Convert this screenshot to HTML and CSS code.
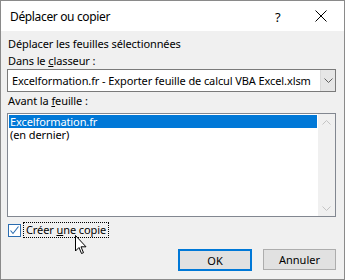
FILE: index.html
```html
<!DOCTYPE html>
<html lang="fr">
<head>
<meta charset="utf-8">
<link rel="stylesheet" href="styles.css">
</head>
<body>
<div class="window">
  <div class="titlebar">
    <span class="title">Déplacer ou copier</span>
    <span class="help">?</span>
    <svg class="close" width="12" height="12" viewBox="0 0 12 12"><path d="M0.5 0.5 L11.5 11.5 M11.5 0.5 L0.5 11.5" stroke="#000" stroke-width="1" fill="none"/></svg>
  </div>
  <div class="content">
    <div class="label l1">Déplacer les feuilles sélectionnées</div>
    <div class="label l2">Dans le <u>c</u>lasseur :</div>
    <div class="combo">
      <span class="combo-text">Excelformation.fr - Exporter feuille de calcul VBA Excel.xlsm</span>
      <span class="combo-btn"><svg width="9" height="5" viewBox="0 0 9 5"><path d="M0.5 0.5 L4.5 4.5 L8.5 0.5" stroke="#606060" fill="none"/></svg></span>
    </div>
    <div class="label l3">Avant la <u>f</u>euille :</div>
    <div class="listbox">
      <div class="items">
        <div class="item selected">Excelformation.fr</div>
        <div class="item">(en dernier)</div>
      </div>
      <div class="scrollbar">
        <svg width="9" height="5" viewBox="0 0 9 5"><path d="M0.5 4.5 L4.5 0.5 L8.5 4.5" stroke="#c4c4c4" fill="none"/></svg>
        <svg width="9" height="5" viewBox="0 0 9 5"><path d="M0.5 0.5 L4.5 4.5 L8.5 0.5" stroke="#c4c4c4" fill="none"/></svg>
      </div>
    </div>
    <div class="checkrow">
      <span class="checkbox"><svg width="11" height="11" viewBox="0 0 11 11"><path d="M1.5 5.5 L4 8.5 L9.5 1.5" stroke="#2a6cb0" stroke-width="1.1" fill="none"/></svg></span>
      <span class="checklabel">Créer <u>u</u>ne copie</span>
    </div>
    <div class="buttons">
      <button class="btn ok">OK</button>
      <button class="btn">Annuler</button>
    </div>
  </div>
  <svg class="cursor" width="13" height="20" viewBox="0 0 13 20"><path d="M0.5 0.5 L0.5 16 L4 12.5 L6.5 18.5 L8.5 17.7 L6 11.8 L11 11.8 Z" fill="#fff" stroke="#000" stroke-width="1" stroke-linejoin="miter"/></svg>
</div>
</body>
</html>
```

FILE: styles.css
```css
* { box-sizing: border-box; }
body {
  margin: 0;
  font-family: "Noto Sans", "Open Sans", sans-serif;
  font-size: 11px;
  letter-spacing: -0.1px;
  color: #000;
}
.window {
  position: relative;
  width: 345px;
  height: 280px;
  border: 1px solid #8a8a8a;
  background: #f0f0f0;
  overflow: hidden;
}
.titlebar {
  height: 30px;
  background: #fff;
  display: flex;
  align-items: center;
  padding: 0 0 0 9px;
}
.title {
  font-size: 12px;
  letter-spacing: -0.35px;
  flex: 1;
  padding-top: 1px;
}
.help {
  font-size: 13px;
  width: 10px;
  margin-right: 30px;
  padding-top: 1px;
}
.close {
  margin-right: 17px;
}
.content {
  padding: 5px 8px 0 6px;
  display: flex;
  flex-direction: column;
}
.label {
  line-height: 15px;
  height: 15px;
  padding-left: 1px;
}
.l2 { margin-top: 2px; }
.combo {
  margin-top: 1px;
  height: 23px;
  border: 1px solid #7a7a7a;
  background: #fff;
  display: flex;
  align-items: stretch;
}
.combo-text {
  flex: 1;
  padding-left: 4px;
  line-height: 21px;
  white-space: nowrap;
  overflow: hidden;
}
.combo-btn {
  width: 15px;
  background: #e6e6e6;
  border-left: 1px solid #d9d9d9;
  display: flex;
  align-items: center;
  justify-content: center;
}
.l3 { margin-top: 1px; }
.listbox {
  margin-top: 5px;
  height: 104px;
  border: 1px solid #828790;
  background: #fff;
  display: flex;
}
.items {
  flex: 1;
  padding: 1px 1px 0 1px;
}
.item {
  height: 13px;
  line-height: 13px;
  padding-left: 1px;
  white-space: nowrap;
}
.item.selected {
  background: #0078d7;
  color: #fff;
}
.scrollbar {
  width: 17px;
  background: #f0f0f0;
  display: flex;
  flex-direction: column;
  justify-content: space-between;
  align-items: center;
  padding: 6px 0 5px;
}
.checkrow {
  margin-top: 5px;
  height: 16px;
  display: flex;
  align-items: center;
}
.checkbox {
  width: 13px;
  height: 13px;
  margin-left: 1px;
  border: 1px solid #2a6cb0;
  background: #fff;
  display: flex;
  align-items: center;
  justify-content: center;
}
.checklabel {
  margin-left: 2px;
  border: 1px dotted #000;
  height: 16px;
  line-height: 14px;
  padding: 0 2px 0 2px;
}
.buttons {
  margin-top: 11px;
  display: flex;
  justify-content: flex-end;
  gap: 11px;
}
.btn {
  font: inherit;
  width: 73px;
  height: 21px;
  background: #e1e1e1;
  border: 1px solid #adadad;
  color: #000;
  padding: 0;
}
.btn.ok {
  border: 2px solid #0078d7;
  width: 74px;
  height: 22px;
}
.cursor {
  position: absolute;
  left: 74px;
  top: 234px;
}
```
